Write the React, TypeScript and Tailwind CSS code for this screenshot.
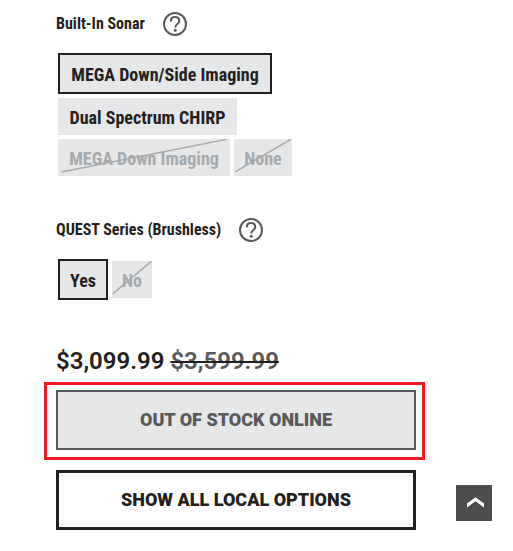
import React, { useState } from 'react';

type Option = { label: string; width: string; unavailable?: boolean };

const sonarOptions: Option[] = [
  { label: 'MEGA Down/Side Imaging', width: 'w-[214px]' },
  { label: 'Dual Spectrum CHIRP', width: 'w-[179px]' },
  { label: 'MEGA Down Imaging', width: 'w-[172px]', unavailable: true },
  { label: 'None', width: 'w-[58px]', unavailable: true },
];

const questOptions: Option[] = [
  { label: 'Yes', width: 'w-[50px]' },
  { label: 'No', width: 'w-10', unavailable: true },
];

const narrow = "font-['Liberation_Sans_Narrow','Roboto_Condensed',Roboto,sans-serif]";

const OptionGroup = ({ title, options }: { title: string; options: Option[] }) => {
  const [selected, setSelected] = useState(options[0].label);

  return (
    <section aria-label={title}>
      <div className="flex h-6 items-center gap-[18px]">
        <h2 className={`text-base font-bold whitespace-nowrap text-[#231f20] ${narrow}`}>{title}</h2>
        <button type="button" aria-label={`About ${title}`} className="text-[#58595b]">
          <svg viewBox="0 0 24 24" className="size-6" fill="none" stroke="currentColor" strokeWidth="2">
            <circle cx="12" cy="12" r="11" />
            <path d="M7.8 9.4C7.8 6.8 9.6 5 12.1 5s4.2 1.6 4.2 3.9c0 3-4.1 3.2-4.1 6.6" />
            <circle cx="12.2" cy="18.3" r="1.5" fill="currentColor" stroke="none" />
          </svg>
        </button>
      </div>
      <div className="mt-[17px] flex max-w-[240px] flex-wrap items-center gap-1 pl-0.5">
        {options.map((option) => (
          <button
            key={option.label}
            type="button"
            disabled={option.unavailable}
            aria-pressed={selected === option.label}
            onClick={() => setSelected(option.label)}
            className={`relative bg-[#e6e7e8] pt-0.5 text-lg font-bold whitespace-nowrap ${narrow} ${option.width} ${
              selected === option.label ? 'h-[41px] border-2 border-[#231f20]' : 'h-[37px]'
            } ${option.unavailable ? 'text-[#a7a9ac]' : 'text-[#231f20]'}`}
          >
            {option.label}
            {option.unavailable && (
              <svg
                viewBox="0 0 100 100"
                preserveAspectRatio="none"
                className="absolute inset-0 size-full"
                stroke="#a7a9ac"
                strokeWidth="1.5"
              >
                <line x1="2" y1="89" x2="98" y2="1" vectorEffect="non-scaling-stroke" />
              </svg>
            )}
          </button>
        ))}
      </div>
    </section>
  );
};

const App = () => {
  return (
    <main className="flex items-end bg-white pt-3 pr-[21px] pb-5 pl-11">
      <div className="min-w-0 flex-1">
        <div className="flex flex-col gap-[42px] pl-3">
          <OptionGroup title="Built-In Sonar" options={sonarOptions} />
          <OptionGroup title="QUEST Series (Brushless)" options={questOptions} />
        </div>

        <p className="mt-[45px] pl-3 font-[Roboto,sans-serif] text-2xl font-semibold text-[#231f20]">
          $3,099.99{' '}
          <s className="decoration-[#231f20] decoration-2">
            <span className="text-[#58595b]">$3,599.99</span>
          </s>
        </p>

        <div className="mt-[5px] border-[3px] border-[#ed1c24] pt-[5px] pr-1.5 pb-[7px] pl-[9px]">
          <button
            type="button"
            disabled
            className="h-[60px] w-full border-2 border-[#58595b] bg-[#e6e7e8] font-[Roboto,sans-serif] text-lg font-black text-[#58595b]"
          >
            OUT OF STOCK ONLINE
          </button>
        </div>

        <div className="mt-2.5 pr-[9px] pl-3">
          <button
            type="button"
            className="h-[60px] w-full border-[3px] border-[#231f20] bg-white font-[Roboto,sans-serif] text-lg font-black text-[#231f20]"
          >
            SHOW ALL LOCAL OPTIONS
          </button>
        </div>
      </div>

      <button
        type="button"
        aria-label="Back to top"
        className="mb-[9px] ml-[31px] flex size-9 shrink-0 items-center justify-center bg-[#4d4d4f]"
      >
        <svg viewBox="0 0 36 36" className="size-9" fill="#ffffff">
          <path d="M11 18.5 19.5 12.3 28 18.5V22.5L19.5 16.3 11 22.5Z" />
        </svg>
      </button>
    </main>
  );
};

export default App;
